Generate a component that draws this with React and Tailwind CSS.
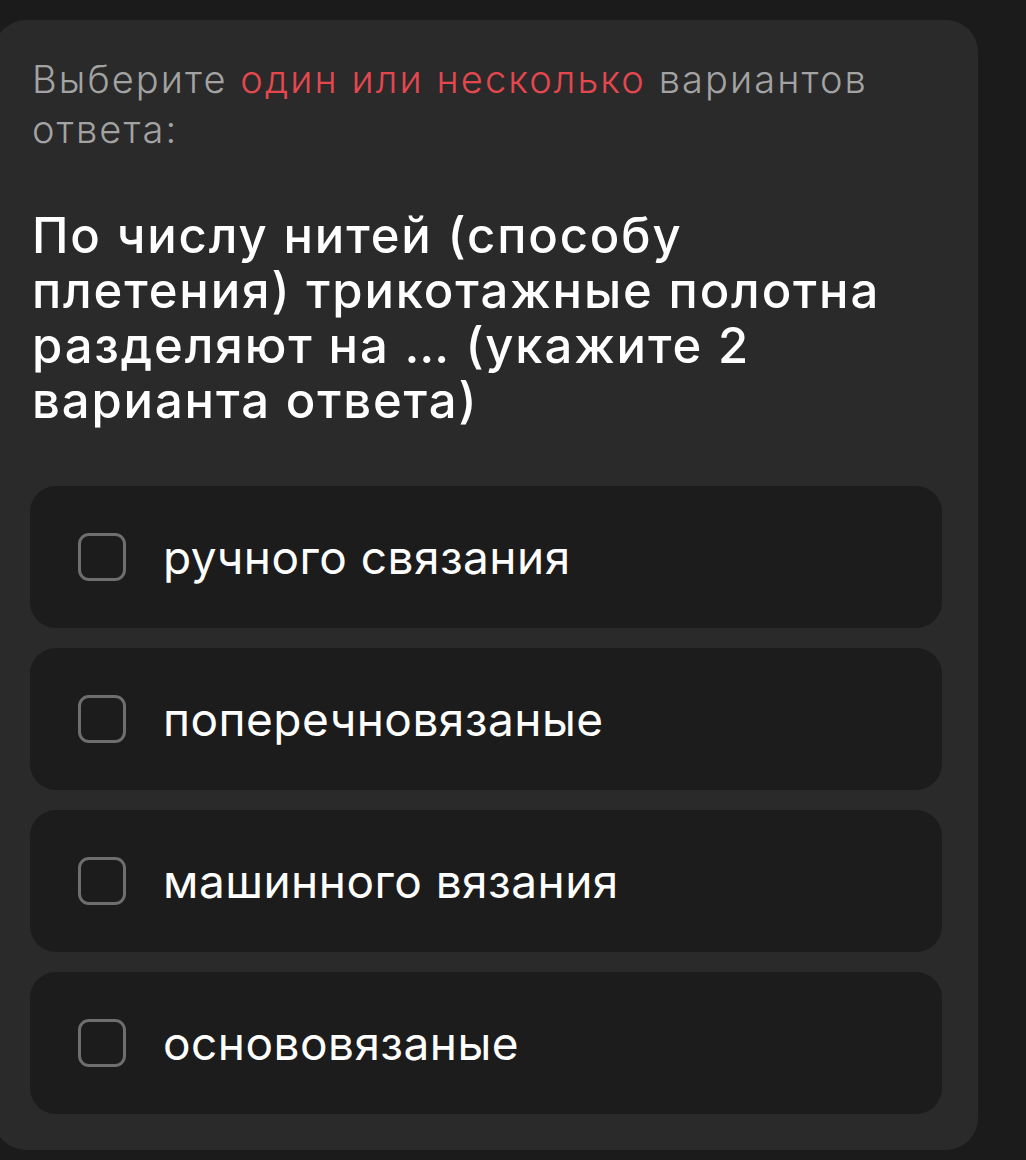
import React, { useState } from 'react'

const options = [
  'ручного связания',
  'поперечновязаные',
  'машинного вязания',
  'основовязаные',
]

const Option = ({ text, checked, onToggle }) => (
  <button
    onClick={onToggle}
    className="flex items-center h-[142px] w-full rounded-[26px] bg-[#1c1c1c] pl-[48px] text-left"
  >
    <span
      className={
        checked
          ? 'w-[48px] h-[48px] rounded-[11px] border-[3px] border-[#e0434b] bg-[#e0434b] shrink-0'
          : 'w-[48px] h-[48px] rounded-[11px] border-[3px] border-[#6e6e6e] shrink-0'
      }
    />
    <span className="ml-[37px] text-[46px] tracking-[0.01em] text-white font-normal leading-none">{text}</span>
  </button>
)

const App = () => {
  const [selected, setSelected] = useState([])

  const toggle = (idx) => {
    setSelected(selected.includes(idx) ? selected.filter((i) => i !== idx) : [...selected, idx])
  }

  return (
    <div
      className="min-h-[1160px] bg-[#1b1b1b] pt-[20px] overflow-hidden"
      style={{ fontFamily: 'Inter, "Noto Sans", sans-serif' }}
    >
      <div className="ml-[-6px] w-[984px] rounded-[32px] bg-[#2a2a2a] px-[36px] pt-[34px] pb-[36px]">
        <p className="text-[38px] leading-[50px] font-light tracking-[0.055em] text-[#a3a3a3] pl-[2px]">
          Выберите <span className="text-[#e5474f]">один или несколько</span> вариантов
          <br />
          ответа:
        </p>

        <h2 className="mt-[54px] text-[49px] leading-[55px] font-medium tracking-[0.038em] text-white pl-[2px]">
          По числу нитей (способу
          <br />
          плетения) трикотажные полотна
          <br />
          разделяют на … (укажите 2
          <br />
          варианта ответа)
        </h2>

        <div className="mt-[58px] flex flex-col gap-[20px]">
          {options.map((opt, idx) => (
            <Option key={idx} text={opt} checked={selected.includes(idx)} onToggle={() => toggle(idx)} />
          ))}
        </div>
      </div>
    </div>
  )
}

export default App
